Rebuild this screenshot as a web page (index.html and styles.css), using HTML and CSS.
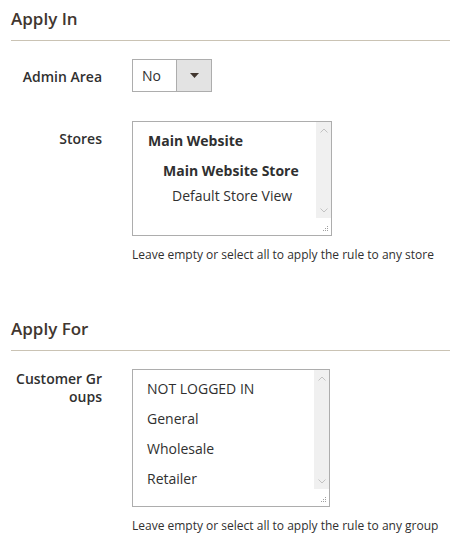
FILE: index.html
```html
<!DOCTYPE html>
<html lang="en">
<head>
    <meta charset="UTF-8">
    <meta name="viewport" content="width=device-width, initial-scale=1.0">
    <title>Apply In / Apply For</title>
    <link rel="stylesheet" href="styles.css">
</head>
<body>
    <div class="page">
        <div class="fieldset">
            <div class="fieldset-title">Apply In</div>
            <div class="fields">
                <div class="field">
                    <label class="field-label">Admin Area</label>
                    <div class="field-control">
                        <div class="select">
                            <span class="select-value">No</span>
                            <span class="select-arrow">
                                <svg width="9" height="5" viewBox="0 0 9 5"><path d="M0 0h9L4.5 5z" fill="#41362f"/></svg>
                            </span>
                        </div>
                    </div>
                </div>
                <div class="field">
                    <label class="field-label">Stores</label>
                    <div class="field-control">
                        <div class="listbox stores">
                            <div class="options">
                                <div class="optgroup">Main Website</div>
                                <div class="optgroup nested">Main Website Store</div>
                                <div class="option nested-option">Default Store View</div>
                            </div>
                            <div class="scroll">
                                <div class="track">
                                    <svg width="8" height="5" viewBox="0 0 8 5"><path d="M0.5 4.5L4 1l3.5 3.5" fill="none" stroke="#c2c2c2" stroke-width="1"/></svg>
                                    <svg width="8" height="5" viewBox="0 0 8 5"><path d="M0.5 0.5L4 4l3.5-3.5" fill="none" stroke="#c2c2c2" stroke-width="1"/></svg>
                                </div>
                                <div class="grip">
                                    <svg width="6" height="6" viewBox="0 0 6 6"><g fill="#a0a0a0"><rect x="4" y="0" width="1" height="1"/><rect x="2" y="2" width="1" height="1"/><rect x="4" y="2" width="1" height="1"/><rect x="0" y="4" width="1" height="1"/><rect x="2" y="4" width="1" height="1"/><rect x="4" y="4" width="1" height="1"/></g></svg>
                                </div>
                            </div>
                        </div>
                        <div class="field-note">Leave empty or select all to apply the rule to any store</div>
                    </div>
                </div>
            </div>
        </div>

        <div class="fieldset second">
            <div class="fieldset-title">Apply For</div>
            <div class="fields">
                <div class="field">
                    <label class="field-label wrap">Customer Groups</label>
                    <div class="field-control">
                        <div class="listbox groups">
                            <div class="options">
                                <div class="option">NOT LOGGED IN</div>
                                <div class="option">General</div>
                                <div class="option">Wholesale</div>
                                <div class="option">Retailer</div>
                            </div>
                            <div class="scroll">
                                <div class="track">
                                    <svg width="8" height="5" viewBox="0 0 8 5"><path d="M0.5 4.5L4 1l3.5 3.5" fill="none" stroke="#c2c2c2" stroke-width="1"/></svg>
                                    <svg width="8" height="5" viewBox="0 0 8 5"><path d="M0.5 0.5L4 4l3.5-3.5" fill="none" stroke="#c2c2c2" stroke-width="1"/></svg>
                                </div>
                                <div class="grip">
                                    <svg width="6" height="6" viewBox="0 0 6 6"><g fill="#a0a0a0"><rect x="4" y="0" width="1" height="1"/><rect x="2" y="2" width="1" height="1"/><rect x="4" y="2" width="1" height="1"/><rect x="0" y="4" width="1" height="1"/><rect x="2" y="4" width="1" height="1"/><rect x="4" y="4" width="1" height="1"/></g></svg>
                                </div>
                            </div>
                        </div>
                        <div class="field-note">Leave empty or select all to apply the rule to any group</div>
                    </div>
                </div>
            </div>
        </div>
    </div>
</body>
</html>
```

FILE: styles.css
```css
*{
    margin: 0;
    padding: 0;
    box-sizing: border-box;
}
body{
    background-color: #ffffff;
    color: #303030;
    font-family: "Open Sans", "Noto Sans", sans-serif;
}
.page{
    padding: 0 6px 0 11px;
}
.fieldset.second{
    margin-top: 47px;
}
.fieldset-title{
    padding-top: 7px;
    padding-bottom: 10px;
    font-size: 17px;
    line-height: 23px;
    font-weight: 600;
    color: #41362f;
    border-bottom: 1px solid #cac3b4;
}
.fields{
    padding-top: 18px;
}
.field{
    display: flex;
    align-items: flex-start;
    margin-bottom: 29px;
}
.field:last-child{
    margin-bottom: 0;
}
.field-label{
    width: 91px;
    margin-right: 30px;
    padding-top: 9px;
    font-size: 14px;
    line-height: 18px;
    font-weight: 600;
    text-align: right;
    word-break: break-all;
}
.field-label.wrap{
    padding-top: 1px;
}

/* dropdown */
.select{
    display: flex;
    width: 80px;
    height: 33px;
    border: 1px solid #adadad;
    font-size: 14px;
    line-height: 31px;
}
.select-value{
    flex: 1;
    padding-left: 9px;
}
.select-arrow{
    width: 35px;
    display: flex;
    align-items: center;
    justify-content: center;
    background-color: #e3e3e3;
    border-left: 1px solid #adadad;
}

/* multiselect boxes */
.listbox{
    display: flex;
    border: 1px solid #adadad;
    font-size: 14px;
}
.listbox.stores{
    width: 200px;
    height: 115px;
}
.listbox.groups{
    width: 198px;
    height: 138px;
}
.options{
    flex: 1;
    padding: 4px 0 0 15px;
}
.listbox.groups .options{
    padding-left: 14px;
}
.optgroup{
    line-height: 30px;
    font-weight: 700;
}
.optgroup.nested{
    padding-left: 15px;
}
.option{
    line-height: 30px;
}
.option.nested-option{
    padding-left: 24px;
    line-height: 20px;
}
.scroll{
    width: 15px;
    display: flex;
    flex-direction: column;
}
.track{
    flex: 1;
    display: flex;
    flex-direction: column;
    justify-content: space-between;
    align-items: center;
    padding: 6px 0 5px;
    background-color: #f0f0f0;
}
.grip{
    height: 17px;
    display: flex;
    justify-content: flex-end;
    align-items: flex-end;
    padding: 0 2px 3px 0;
}
.field-note{
    margin-top: 10px;
    font-size: 12px;
    line-height: 17px;
}
```
